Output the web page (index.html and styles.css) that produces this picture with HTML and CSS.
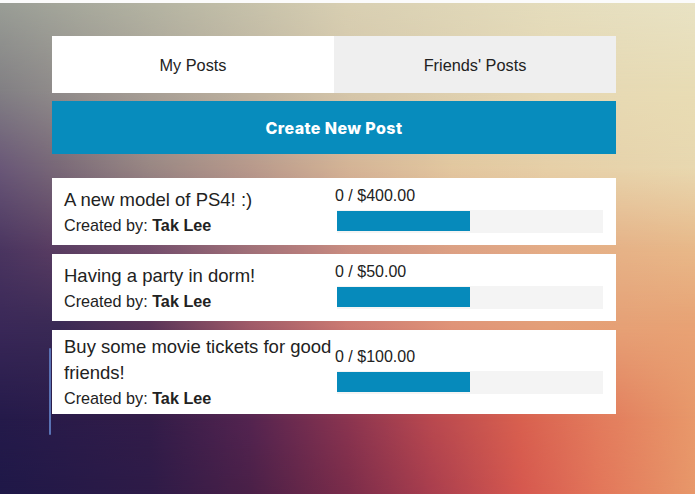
FILE: index.html
```html
<!DOCTYPE html>
<html>
<head>
<meta charset="utf-8">
<link rel="stylesheet" href="styles.css">
</head>
<body>
<svg class="backdrop" viewBox="0 0 695 494" preserveAspectRatio="none" aria-hidden="true">
  <defs>
    <linearGradient id="r0"><stop offset="0" stop-color="#9a9e96"/><stop offset="0.22" stop-color="#b4b4a2"/><stop offset="0.5" stop-color="#d8cfb2"/><stop offset="0.79" stop-color="#e4dcbc"/><stop offset="1" stop-color="#e8e2c4"/></linearGradient>
    <linearGradient id="r1"><stop offset="0" stop-color="#828084"/><stop offset="0.22" stop-color="#a8a096"/><stop offset="0.5" stop-color="#d4c6aa"/><stop offset="0.79" stop-color="#e6d8b4"/><stop offset="1" stop-color="#e8dcb4"/></linearGradient>
    <linearGradient id="r2"><stop offset="0" stop-color="#6a5878"/><stop offset="0.086" stop-color="#7a6a78"/><stop offset="0.216" stop-color="#9a8884"/><stop offset="0.36" stop-color="#b89a8c"/><stop offset="0.5" stop-color="#d4b496"/><stop offset="0.65" stop-color="#e2c8a0"/><stop offset="0.79" stop-color="#e6d0a8"/><stop offset="1" stop-color="#e8d8b0"/></linearGradient>
    <linearGradient id="r3"><stop offset="0" stop-color="#4a3560"/><stop offset="0.086" stop-color="#5a3d62"/><stop offset="0.216" stop-color="#744e6c"/><stop offset="0.36" stop-color="#a07078"/><stop offset="0.43" stop-color="#b47c7c"/><stop offset="0.5" stop-color="#c88c80"/><stop offset="0.65" stop-color="#dca084"/><stop offset="0.79" stop-color="#e4ac86"/><stop offset="1" stop-color="#e8b888"/></linearGradient>
    <linearGradient id="r4"><stop offset="0" stop-color="#3a2858"/><stop offset="0.086" stop-color="#3a2a55"/><stop offset="0.216" stop-color="#5a3458"/><stop offset="0.36" stop-color="#a05a68"/><stop offset="0.5" stop-color="#cc7a72"/><stop offset="0.65" stop-color="#e09478"/><stop offset="0.79" stop-color="#e4a078"/><stop offset="1" stop-color="#e8a274"/></linearGradient>
    <linearGradient id="r5"><stop offset="0" stop-color="#241a4a"/><stop offset="0.216" stop-color="#321c48"/><stop offset="0.36" stop-color="#542450"/><stop offset="0.5" stop-color="#8a3450"/><stop offset="0.62" stop-color="#b8484f"/><stop offset="0.75" stop-color="#d8604f"/><stop offset="0.86" stop-color="#e27a5c"/><stop offset="1" stop-color="#e8986a"/></linearGradient>
    <linearGradient id="r6"><stop offset="0" stop-color="#1f1848"/><stop offset="0.216" stop-color="#2e1b48"/><stop offset="0.36" stop-color="#4a2048"/><stop offset="0.5" stop-color="#7a2c4a"/><stop offset="0.62" stop-color="#a93e4e"/><stop offset="0.75" stop-color="#d6584f"/><stop offset="0.86" stop-color="#e3765a"/><stop offset="1" stop-color="#e8986a"/></linearGradient>

    <linearGradient id="m0g" x1="0" y1="0" x2="0" y2="1"><stop offset="0" stop-color="#fff"/><stop offset="0.182" stop-color="#000"/></linearGradient>
    <linearGradient id="m1g" x1="0" y1="0" x2="0" y2="1"><stop offset="0.182" stop-color="#fff"/><stop offset="0.336" stop-color="#000"/></linearGradient>
    <linearGradient id="m2g" x1="0" y1="0" x2="0" y2="1"><stop offset="0.336" stop-color="#fff"/><stop offset="0.506" stop-color="#000"/></linearGradient>
    <linearGradient id="m3g" x1="0" y1="0" x2="0" y2="1"><stop offset="0.506" stop-color="#fff"/><stop offset="0.66" stop-color="#000"/></linearGradient>
    <linearGradient id="m4g" x1="0" y1="0" x2="0" y2="1"><stop offset="0.66" stop-color="#fff"/><stop offset="0.85" stop-color="#000"/></linearGradient>
    <linearGradient id="m5g" x1="0" y1="0" x2="0" y2="1"><stop offset="0.85" stop-color="#fff"/><stop offset="1" stop-color="#000"/></linearGradient>

    <mask id="m0"><rect width="695" height="494" fill="url(#m0g)"/></mask>
    <mask id="m1"><rect width="695" height="494" fill="url(#m1g)"/></mask>
    <mask id="m2"><rect width="695" height="494" fill="url(#m2g)"/></mask>
    <mask id="m3"><rect width="695" height="494" fill="url(#m3g)"/></mask>
    <mask id="m4"><rect width="695" height="494" fill="url(#m4g)"/></mask>
    <mask id="m5"><rect width="695" height="494" fill="url(#m5g)"/></mask>
  </defs>
  <rect width="695" height="494" fill="url(#r6)"/>
  <rect width="695" height="494" fill="url(#r5)" mask="url(#m5)"/>
  <rect width="695" height="494" fill="url(#r4)" mask="url(#m4)"/>
  <rect width="695" height="494" fill="url(#r3)" mask="url(#m3)"/>
  <rect width="695" height="494" fill="url(#r2)" mask="url(#m2)"/>
  <rect width="695" height="494" fill="url(#r1)" mask="url(#m1)"/>
  <rect width="695" height="494" fill="url(#r0)" mask="url(#m0)"/>
</svg>
<div class="strip"></div>
<main class="container">
  <div class="tabs">
    <div class="tab active">My Posts</div>
    <div class="tab">Friends' Posts</div>
  </div>
  <div class="create">Create New Post</div>
  <div class="posts">
    <div class="card">
      <div class="info">
        <div class="title">A new model of PS4! :)</div>
        <div class="by">Created by: <b>Tak Lee</b></div>
      </div>
      <div class="funding">
        <div class="amount">0 / $400.00</div>
        <div class="bar"><div class="fill" style="width:50%"></div></div>
      </div>
    </div>
    <div class="card">
      <div class="info">
        <div class="title">Having a party in dorm!</div>
        <div class="by">Created by: <b>Tak Lee</b></div>
      </div>
      <div class="funding">
        <div class="amount">0 / $50.00</div>
        <div class="bar"><div class="fill" style="width:50%"></div></div>
      </div>
    </div>
    <div class="card">
      <div class="info">
        <div class="title">Buy some movie tickets for good friends!</div>
        <div class="by">Created by: <b>Tak Lee</b></div>
      </div>
      <div class="funding">
        <div class="amount">0 / $100.00</div>
        <div class="bar"><div class="fill" style="width:50%"></div></div>
      </div>
    </div>
  </div>
</main>
<div class="edge-line"></div>
</body>
</html>
```
FILE: styles.css
```css
html, body {
  margin: 0;
  padding: 0;
  height: 100%;
}
body {
  position: relative;
  font-family: "Liberation Sans", Arial, sans-serif;
  color: #222;
  overflow: hidden;
  background: #7a2c4a;
}
.backdrop {
  position: absolute;
  top: 0;
  left: 0;
  width: 100%;
  height: 100%;
  z-index: 0;
}
.strip {
  position: relative;
  z-index: 1;
  height: 3px;
  background: #fbfbfb;
}
.container {
  position: relative;
  z-index: 1;
  width: 564px;
  margin: 33px 0 0 52px;
  display: block;
}
.tabs {
  display: grid;
  grid-template-columns: 1fr 1fr;
  height: 57px;
}
.tab {
  display: flex;
  align-items: center;
  justify-content: center;
  font-size: 16.3px;
  background: #efefef;
  color: #222;
  padding-top: 1px;
}
.tab.active {
  background: #fff;
}
.create {
  margin-top: 8px;
  height: 53px;
  background: #078cbd;
  color: #fff;
  display: flex;
  align-items: center;
  justify-content: center;
  font-family: Inter, "Open Sans", sans-serif;
  font-weight: 800;
  font-size: 16px;
  letter-spacing: 0.4px;
}
.posts {
  margin-top: 24px;
  display: flex;
  flex-direction: column;
  gap: 9px;
}
.card {
  background: #fff;
  display: grid;
  grid-template-columns: 270px 1fr;
  align-items: center;
  padding: 4px 13px 4px 12px;
}
.title {
  font-size: 18.5px;
  line-height: 26px;
}
.by {
  font-size: 16.2px;
  line-height: 24px;
}
.by b {
  font-weight: 700;
}
.funding {
  padding-top: 4px;
  padding-bottom: 8px;
}
.amount {
  font-size: 16px;
  line-height: 20px;
  margin-left: 1px;
  margin-bottom: 4px;
}
.bar {
  margin-left: 3px;
  height: 23px;
  background: #f4f4f4;
  position: relative;
}
.fill {
  position: absolute;
  left: 0;
  top: 1px;
  bottom: 2px;
  background: #068abb;
}
.edge-line {
  position: absolute;
  z-index: 1;
  left: 49px;
  top: 348px;
  width: 2px;
  height: 87px;
  background: #5a72b4;
  border-radius: 1px;
}
```
